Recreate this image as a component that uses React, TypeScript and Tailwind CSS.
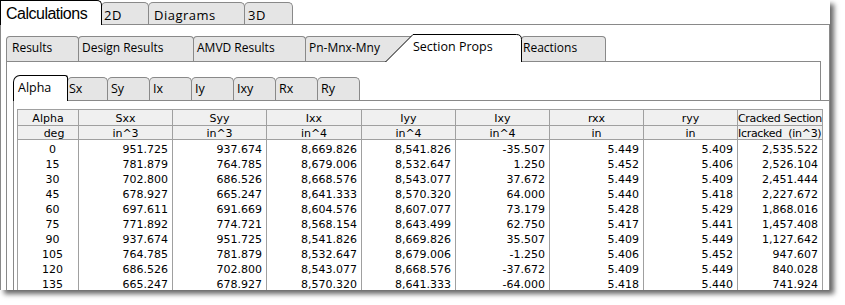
import React from 'react';

const rows: string[][] = [
  ['0', '951.725', '937.674', '8,669.826', '8,541.826', '-35.507', '5.449', '5.409', '2,535.522'],
  ['15', '781.879', '764.785', '8,679.006', '8,532.647', '1.250', '5.452', '5.406', '2,526.104'],
  ['30', '702.800', '686.526', '8,668.576', '8,543.077', '37.672', '5.449', '5.409', '2,451.444'],
  ['45', '678.927', '665.247', '8,641.333', '8,570.320', '64.000', '5.440', '5.418', '2,227.672'],
  ['60', '697.611', '691.669', '8,604.576', '8,607.077', '73.179', '5.428', '5.429', '1,868.016'],
  ['75', '771.892', '774.721', '8,568.154', '8,643.499', '62.750', '5.417', '5.441', '1,457.408'],
  ['90', '937.674', '951.725', '8,541.826', '8,669.826', '35.507', '5.409', '5.449', '1,127.642'],
  ['105', '764.785', '781.879', '8,532.647', '8,679.006', '-1.250', '5.406', '5.452', '947.607'],
  ['120', '686.526', '702.800', '8,543.077', '8,668.576', '-37.672', '5.409', '5.449', '840.028'],
  ['135', '665.247', '678.927', '8,570.320', '8,641.333', '-64.000', '5.418', '5.440', '741.924'],
];

const colW = ['w-[61px]', 'w-[94px]', 'w-[94px]', 'w-[95px]', 'w-[94px]', 'w-[94px]', 'w-[94px]', 'w-[94px]', 'w-[85px]'];
const head1 = ['Alpha', 'Sxx', 'Syy', 'Ixx', 'Iyy', 'Ixy', 'rxx', 'ryy'];
const head2 = ['deg', 'in^3', 'in^3', 'in^4', 'in^4', 'in^4', 'in', 'in'];

const subTabs: { label: string; w: string; pl: string }[] = [
  { label: 'Sx', w: 'w-[41px]', pl: 'pl-[1px]' },
  { label: 'Sy', w: 'w-[43px]', pl: 'pl-[3px]' },
  { label: 'Ix', w: 'w-[43px]', pl: 'pl-[3px]' },
  { label: 'Iy', w: 'w-[43px]', pl: 'pl-[3px]' },
  { label: 'Ixy', w: 'w-[43px]', pl: 'pl-[3px]' },
  { label: 'Rx', w: 'w-[43px]', pl: 'pl-[3px]' },
  { label: 'Ry', w: 'w-[43px]', pl: 'pl-[3px]' },
];

export default function App() {
  return (
    <div className="w-[845px] h-[305px] bg-white">
      <div className="w-[830px] h-[290px] bg-white overflow-hidden flex flex-col shadow-[4px_4px_5px_rgba(0,0,0,0.6)]">
        {/* top level tabs */}
        <div className="flex items-end h-[24px] shrink-0 font-['Open_Sans',sans-serif] text-black">
          <div className="relative z-10 -mb-px h-[25px] w-[102px] shrink-0 bg-white border border-b-0 border-black rounded-tr-[5px] pl-[5px] pt-[4px] text-[16px] leading-[18px] tracking-[-0.5px] font-['Liberation_Sans',sans-serif]">
            Calculations
          </div>
          <div className="-ml-px h-[22px] w-[48px] shrink-0 bg-[#e5e5e5] border border-b-0 border-[#898989] rounded-t-[5px] pl-[2px] pt-[4px] text-[13px] leading-[17px] tracking-[0.5px]">
            2D
          </div>
          <div className="-ml-px h-[22px] w-[97px] shrink-0 bg-[#e5e5e5] border border-b-0 border-[#898989] rounded-t-[5px] pl-[5px] pt-[4px] text-[13px] leading-[17px] tracking-[0.5px]">
            Diagrams
          </div>
          <div className="-ml-px h-[22px] w-[49px] shrink-0 bg-[#e5e5e5] border border-b-0 border-[#898989] rounded-t-[5px] pl-[3px] pt-[4px] text-[13px] leading-[17px] tracking-[0.5px]">
            3D
          </div>
        </div>

        <div className="flex-1 min-h-0 border border-b-0 border-[#898989] pt-[9px] pl-[5px] pr-[8px]">
          {/* second level tabs */}
          <div className="flex items-end h-[27px] font-['Open_Sans',sans-serif] text-[12px] leading-[16px] text-black">
            <div className="h-[25px] w-[73px] shrink-0 bg-[#e5e5e5] border border-b-0 border-[#898989] rounded-t-[4px] pl-[5px] pt-[3px]">Results</div>
            <div className="-ml-px h-[25px] w-[116px] shrink-0 bg-[#e5e5e5] border border-b-0 border-[#898989] rounded-t-[4px] pl-[3px] pt-[3px]">Design Results</div>
            <div className="-ml-px h-[25px] w-[113px] shrink-0 bg-[#e5e5e5] border border-b-0 border-[#898989] rounded-t-[4px] pl-[3px] pt-[3px]">AMVD Results</div>
            <div className="-ml-px h-[25px] w-[116px] shrink-0 bg-[#e5e5e5] border border-b-0 border-[#898989] rounded-t-[4px] pl-[3px] pt-[3px]">Pn-Mnx-Mny</div>
            <div className="relative z-10 -ml-[36px] -mb-px h-[28px] w-[137px] shrink-0">
              <svg className="absolute inset-0" width="137" height="28" viewBox="0 0 137 28">
                <path d="M0.5 28 L28 0.5 L131.5 0.5 Q136.5 0.5 136.5 5.5 L136.5 28 Z" fill="white" stroke="none" />
                <path d="M0.5 28 L28 0.5 L131.5 0.5 Q136.5 0.5 136.5 5.5 L136.5 28" fill="none" stroke="black" strokeWidth="1" />
              </svg>
              <div className="relative pl-[28px] pt-[4px] text-[12.5px] leading-[17px]">Section Props</div>
            </div>
            <div className="-ml-px h-[25px] w-[85px] shrink-0 bg-[#e5e5e5] border border-b-0 border-[#898989] rounded-t-[4px] pl-[1px] pt-[3px]">Reactions</div>
          </div>

          <div className="h-[300px] border border-b-0 border-[#898989] pt-[13px] pl-[6px]">
            {/* third level tabs */}
            <div className="flex items-end h-[25px] w-[816px] font-['Open_Sans',sans-serif] text-[12.5px] leading-[17px] text-black">
              <div className="relative z-10 -mb-px h-[26px] w-[55px] shrink-0 bg-white border border-b-0 border-black rounded-tl-[7px] rounded-tr-[3px] pl-[4px] pt-[3px]">Alpha</div>
              {subTabs.map((t) => (
                <div key={t.label} className={`-ml-px h-[23px] ${t.w} shrink-0 bg-[#e5e5e5] border border-b-0 border-[#898989] rounded-t-[5px] ${t.pl} pt-[2px]`}>
                  {t.label}
                </div>
              ))}
            </div>

            <div className="w-[816px] h-[300px] bg-white border-l border-t border-[#898989] pt-[8px] pl-[3px]">
              <div className="w-[806px] border-l border-t border-[#a0a0a0] font-['DejaVu_Sans',sans-serif] text-[11px] text-black">
                {/* header row 1 */}
                <div className="flex h-[16px] bg-[#f0f0f0] border-b border-[#a0a0a0]">
                  {head1.map((h, i) => (
                    <div key={i} className={`${colW[i]} shrink-0 border-r border-[#a0a0a0] text-center pt-[1px] leading-[15px]`}>{h}</div>
                  ))}
                  <div className={`${colW[8]} shrink-0 border-r border-[#a0a0a0] overflow-hidden whitespace-nowrap pt-[1px] leading-[15px] tracking-[-0.35px]`}>Cracked Section</div>
                </div>
                {/* header row 2 */}
                <div className="flex h-[14px] bg-[#f0f0f0] border-b border-[#a0a0a0]">
                  {head2.map((h, i) => (
                    <div key={i} className={`${colW[i]} shrink-0 border-r border-[#a0a0a0] text-center pt-[1px] leading-[13px] ${i === 0 ? 'pl-[12px]' : ''}`}>{h}</div>
                  ))}
                  <div className={`${colW[8]} shrink-0 border-r border-[#a0a0a0] overflow-hidden whitespace-pre pt-[1px] leading-[13px] tracking-[-0.3px]`}>{'Icracked  (in^3)'}</div>
                </div>
                {/* data */}
                {rows.map((r, ri) => (
                  <div key={ri} className="flex h-[15px]">
                    {r.map((v, ci) => (
                      <div
                        key={ci}
                        className={`${colW[ci]} shrink-0 border-r border-[#a0a0a0] pt-[2px] leading-[15px] ${ci === 0 ? 'text-center pl-[9px]' : 'text-right pr-[4px]'}`}
                      >
                        {v}
                      </div>
                    ))}
                  </div>
                ))}
              </div>
            </div>
          </div>
        </div>
      </div>
    </div>
  );
}
